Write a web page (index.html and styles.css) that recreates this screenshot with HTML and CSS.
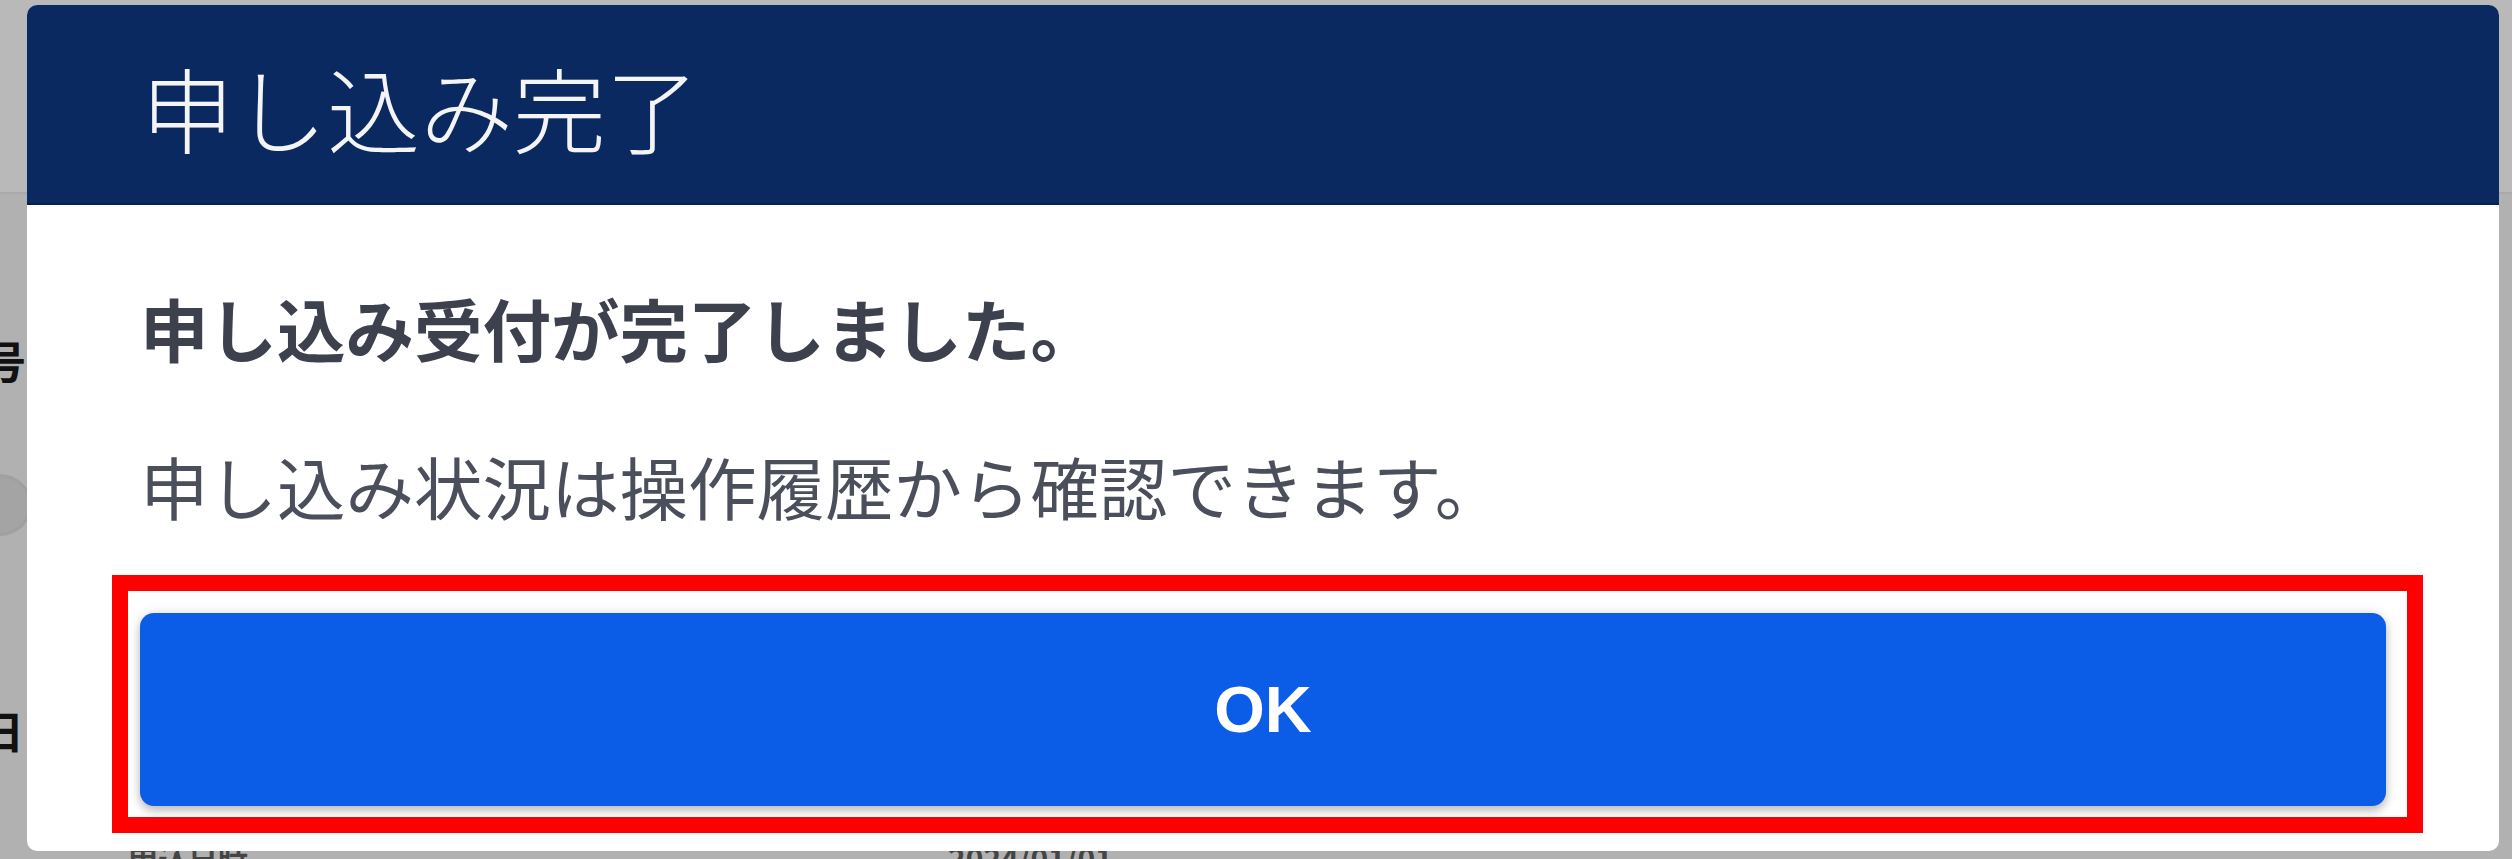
FILE: index.html
```html
<!DOCTYPE html>
<html lang="ja">
<head>
  <meta charset="UTF-8" />
  <title>申し込み完了</title>
  <link rel="stylesheet" href="styles.css">
</head>
<body>

  <!-- === Page behind the overlay === -->
  <div class="backdrop">
    <div class="backdrop-top"></div>
    <div class="backdrop-row row-one">受付番号</div>
    <div class="backdrop-dot"></div>
    <div class="backdrop-row row-two">確認日</div>
    <div class="backdrop-foot">
      <span class="foot-a">申込日時</span>
      <span class="foot-b">2024/01/01</span>
    </div>
  </div>

  <!-- === Modal === -->
  <div class="modal">
    <div class="modal-head">
      <h1>申し込み完了</h1>
    </div>
    <div class="modal-body">
      <p class="lead">申し込み受付が完了しました。</p>
      <p class="note">申し込み状況は操作履歴から確認できます。</p>
      <div class="action">
        <button class="ok-btn">OK</button>
      </div>
    </div>
  </div>

</body>
</html>
```

FILE: styles.css
```css
html, body {
  margin: 0;
  padding: 0;
}

body {
  width: 2512px;
  height: 859px;
  overflow: hidden;
  background: #b1b1b1;
  font-family: "Noto Sans CJK JP", sans-serif;
  position: relative;
}

/* === Backdrop (dimmed page) === */
.backdrop {
  display: flex;
  flex-direction: column;
}

.backdrop-top {
  height: 192px;
  background: #b9b9b9;
  border-bottom: 2px solid #a9a9a9;
}

.backdrop-row {
  font-size: 44px;
  font-weight: bold;
  color: #111;
  line-height: 48px;
  white-space: nowrap;
}

.row-one {
  margin: 142px 0 0 -150px;
}

.backdrop-dot {
  width: 60px;
  height: 56px;
  margin: 90px 0 0 -34px;
  border-radius: 50%;
  background: #a4a4a4;
  border: 3px solid #a0a0a0;
}

.row-two {
  margin: 170px 0 0 -108px;
}

.backdrop-foot {
  display: flex;
  margin-top: 86px;
  font-size: 30px;
  font-weight: bold;
  color: #444;
  line-height: 34px;
}

.foot-a {
  margin-left: 128px;
}

.foot-b {
  margin-left: 700px;
}

/* === Modal === */
.modal {
  position: absolute;
  left: 27px;
  top: 5px;
  width: 2472px;
  height: 846px;
  background: #fff;
  border-radius: 10px;
  overflow: hidden;
}

.modal-head {
  height: 198px;
  background: #0a2961;
  border-bottom: 2px solid #051f52;
  display: flex;
  align-items: center;
  padding-left: 114px;
}

.modal-head h1 {
  margin: 0;
  font-size: 93px;
  font-weight: 300;
  color: #f4f4f4;
  line-height: 1;
  padding-top: 4px;
}

.modal-body {
  padding: 73px 113px 45px 113px;
}

.modal-body p {
  margin: 0;
  font-size: 68.5px;
  line-height: 100px;
  white-space: nowrap;
}

.lead {
  font-weight: bold;
  color: #3d414e;
}

.note {
  margin-top: 58px !important;
  color: #4b4f5b;
}

/* === OK button + highlight frame === */
.action {
  position: relative;
  margin-top: 77px;
}

.action::after {
  content: "";
  position: absolute;
  left: -28px;
  right: -37px;
  top: -38px;
  bottom: -27px;
  border: 16px solid #ff0000;
  pointer-events: none;
}

.ok-btn {
  display: block;
  width: 100%;
  height: 193px;
  border: none;
  border-radius: 14px;
  background: #0b5ce6;
  color: #fff;
  font-family: "Liberation Sans", Arial, sans-serif;
  font-weight: bold;
  font-size: 65px;
  box-shadow: 0 0 14px rgba(0, 0, 0, 0.1), 0 5px 8px rgba(0, 0, 0, 0.22);
}
```
